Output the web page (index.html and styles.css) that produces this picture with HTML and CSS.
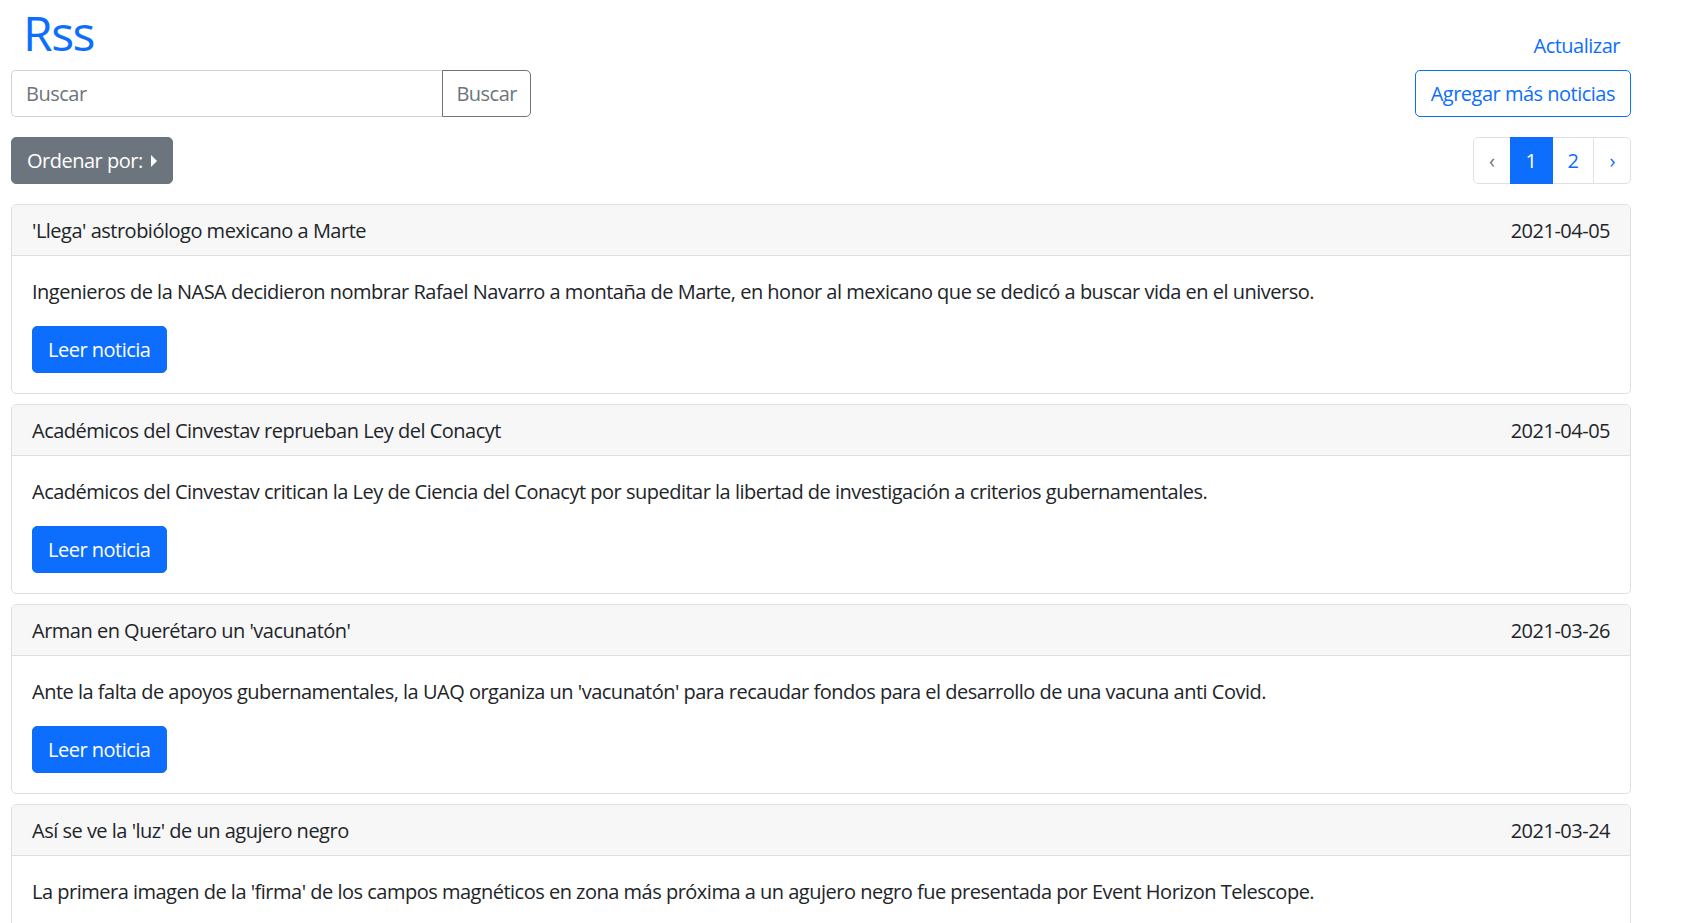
FILE: index.html
```html
<!DOCTYPE html>
<html lang="es">
<head>
<meta charset="utf-8">
<title>Rss</title>
<link rel="stylesheet" href="styles.css">
</head>
<body>
<div class="page">
  <div class="top-row">
    <h1 class="title">Rss</h1>
    <a class="link-update" href="#">Actualizar</a>
  </div>
  <div class="bar search-bar">
    <div class="input-group">
      <input class="search-input" type="text" placeholder="Buscar">
      <button class="btn btn-outline-secondary search-btn">Buscar</button>
    </div>
    <button class="btn btn-outline-primary">Agregar más noticias</button>
  </div>
  <div class="bar sort-bar">
    <button class="btn btn-secondary dropend">Ordenar por:</button>
    <nav class="pagination">
      <span class="page-link disabled">&lsaquo;</span>
      <span class="page-link active">1</span>
      <span class="page-link">2</span>
      <span class="page-link">&rsaquo;</span>
    </nav>
  </div>
  <div class="cards">
    <div class="card">
      <div class="card-header"><span>'Llega' astrobiólogo mexicano a Marte</span><span>2021-04-05</span></div>
      <div class="card-body">
        <p class="card-text">Ingenieros de la NASA decidieron nombrar Rafael Navarro a montaña de Marte, en honor al mexicano que se dedicó a buscar vida en el universo.</p>
        <button class="btn btn-primary">Leer noticia</button>
      </div>
    </div>
    <div class="card">
      <div class="card-header"><span>Académicos del Cinvestav reprueban Ley del Conacyt</span><span>2021-04-05</span></div>
      <div class="card-body">
        <p class="card-text">Académicos del Cinvestav critican la Ley de Ciencia del Conacyt por supeditar la libertad de investigación a criterios gubernamentales.</p>
        <button class="btn btn-primary">Leer noticia</button>
      </div>
    </div>
    <div class="card">
      <div class="card-header"><span>Arman en Querétaro un 'vacunatón'</span><span>2021-03-26</span></div>
      <div class="card-body">
        <p class="card-text">Ante la falta de apoyos gubernamentales, la UAQ organiza un 'vacunatón' para recaudar fondos para el desarrollo de una vacuna anti Covid.</p>
        <button class="btn btn-primary">Leer noticia</button>
      </div>
    </div>
    <div class="card">
      <div class="card-header"><span>Así se ve la 'luz' de un agujero negro</span><span>2021-03-24</span></div>
      <div class="card-body">
        <p class="card-text">La primera imagen de la 'firma' de los campos magnéticos en zona más próxima a un agujero negro fue presentada por Event Horizon Telescope.</p>
        <button class="btn btn-primary">Leer noticia</button>
      </div>
    </div>
  </div>
</div>
</body>
</html>
```
FILE: styles.css
```css
html, body {
  margin: 0;
  padding: 0;
  overflow: hidden;
  background: #fff;
}
body {
  font-family: "Open Sans", "Noto Sans", sans-serif;
  font-size: 20px;
  line-height: 1.5;
  letter-spacing: -0.5px;
  color: #212529;
}
.page {
  width: 1620px;
  margin-left: 11px;
}
.top-row {
  display: flex;
  justify-content: space-between;
  align-items: flex-end;
  margin-bottom: 4px;
}
.title {
  margin: 0 0 0 12px;
  font-size: 48px;
  font-weight: 400;
  line-height: 66px;
  letter-spacing: -1.5px;
  color: #0d6efd;
}
.link-update {
  color: #0d6efd;
  text-decoration: none;
  padding-right: 11px;
  margin-bottom: 5px;
  line-height: 30px;
}
.bar {
  display: flex;
  justify-content: space-between;
  align-items: center;
  margin-bottom: 20px;
}
.btn {
  font-family: inherit;
  font-size: 20px;
  line-height: 30px;
  letter-spacing: -0.5px;
  padding: 7.5px 15px;
  border: 1px solid transparent;
  border-radius: 5px;
  background: transparent;
  cursor: pointer;
}
.btn-primary {
  background: #0d6efd;
  border-color: #0d6efd;
  color: #fff;
}
.btn-secondary {
  background: #6c757d;
  border-color: #6c757d;
  color: #fff;
}
.btn-outline-primary {
  border-color: #0d6efd;
  color: #0d6efd;
}
.btn-outline-secondary {
  border-color: #6c757d;
  color: #6c757d;
}
.input-group {
  display: flex;
  width: 520px;
}
.search-input {
  flex: 1;
  min-width: 0;
  font-family: inherit;
  font-size: 20px;
  line-height: 30px;
  letter-spacing: -0.5px;
  padding: 7.5px 14px;
  border: 1px solid #ced4da;
  border-right: none;
  border-radius: 5px 0 0 5px;
  color: #212529;
  outline: none;
}
.search-input::placeholder {
  color: #6c757d;
}
.search-btn {
  border-radius: 0 5px 5px 0;
  padding: 7.5px 13px;
}
.dropend::after {
  content: "";
  display: inline-block;
  margin-left: 8px;
  vertical-align: 1px;
  border-top: 6px solid transparent;
  border-bottom: 6px solid transparent;
  border-left: 6px solid currentColor;
}
.pagination {
  display: flex;
}
.page-link {
  display: block;
  padding: 7.5px 15px;
  line-height: 30px;
  border: 1px solid #dee2e6;
  color: #0d6efd;
  background: #fff;
  margin-left: -1px;
}
.page-link:first-child {
  margin-left: 0;
  border-radius: 5px 0 0 5px;
}
.page-link:last-child {
  border-radius: 0 5px 5px 0;
}
.page-link.disabled {
  color: #6c757d;
}
.page-link.active {
  background: #0d6efd;
  border-color: #0d6efd;
  color: #fff;
  position: relative;
}
.card {
  border: 1px solid #dfdfdf;
  border-radius: 5px;
  margin-bottom: 10px;
  overflow: hidden;
}
.card-header {
  display: flex;
  justify-content: space-between;
  padding: 11px 20px 9px;
  background: #f7f7f7;
  border-bottom: 1px solid #dfdfdf;
}
.card-body {
  padding: 20px;
}
.card-text {
  margin: 0 0 19px;
  padding-top: 1px;
}
```
